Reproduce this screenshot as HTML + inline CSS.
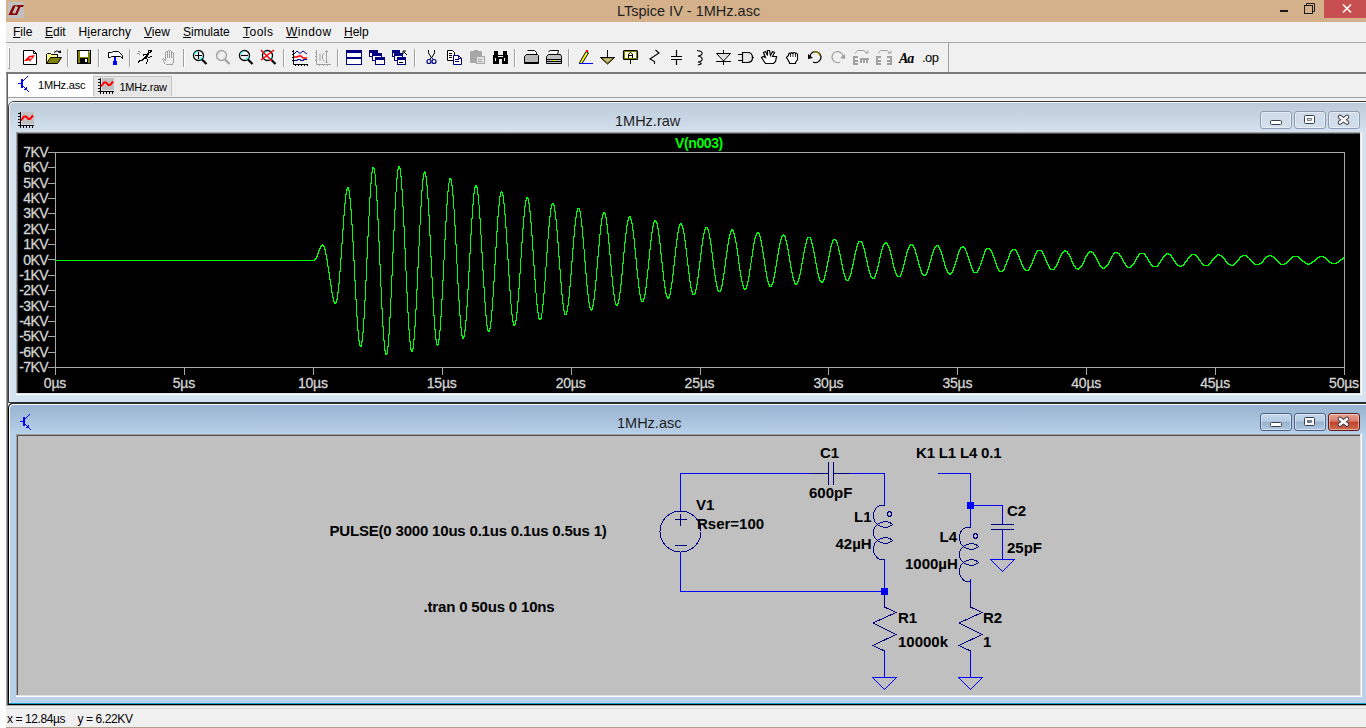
<!DOCTYPE html>
<html><head><meta charset="utf-8"><title>LTspice IV - 1MHz.asc</title>
<style>
*{margin:0;padding:0;box-sizing:border-box}
html,body{width:1366px;height:728px;overflow:hidden;background:#fff;position:relative;font-family:"Liberation Sans",sans-serif}
.a{position:absolute}
.t{position:absolute;white-space:nowrap}
.yl{left:17px;width:31px;text-align:right;font-size:14px;line-height:14px;font-weight:normal;color:#d4d4d4;letter-spacing:-0.6px;-webkit-text-stroke:0.3px #d4d4d4}
.xl{top:376px;width:60px;text-align:center;font-size:14px;line-height:14px;font-weight:normal;color:#d4d4d4;letter-spacing:-0.2px;-webkit-text-stroke:0.3px #d4d4d4}
u{text-decoration:underline;text-underline-offset:1px}
</style></head><body>
<div class="a" style="left:6px;top:0px;width:1360px;height:22px;background:#d4b18b;"></div><div class="a" style="left:8px;top:2px;width:16px;height:16px;background:#c0c0c0;"></div><svg class="a" style="left:8px;top:2px" width="16" height="16"><path d="M0.5 13 L4.5 4.5 Q5 3 7 3 H8 L4.5 10.5 Q4 11.5 6 11.5 H7.5 L6.5 13 Z M8.5 3 H16 L15 5 H12.5 L9 13 H6.5 L10 5.5 Q10.5 4.5 9 4.5 H8 Z" fill="#8b0000"/></svg><div class="t" style="left:617px;top:3.73px;font-size:14.5px;line-height:14.5px;color:#1e1e1e;font-weight:normal;letter-spacing:0px;">LTspice IV - 1MHz.asc</div><div class="a" style="left:1280px;top:10px;width:8px;height:2px;background:#1a1a1a;"></div><svg class="a" style="left:1304px;top:3px" width="12" height="11"><rect x="0.5" y="2.5" width="8" height="8" fill="none" stroke="#1a1a1a"/><path d="M2.5 2.5V0.5H10.5V8.5H8.5" fill="none" stroke="#1a1a1a"/></svg><div class="a" style="left:1324px;top:0px;width:42px;height:18px;background:#c74f4f;"></div><svg class="a" style="left:1341px;top:3px" width="12" height="11"><path d="M2 1.5L10 9.5M10 1.5L2 9.5" stroke="#fff" stroke-width="1.6"/></svg><div class="a" style="left:6px;top:22px;width:1360px;height:20px;background:#f0f0f0;"></div><div class="a" style="left:6px;top:42px;width:1360px;height:1px;background:#a9a9a9;"></div><div class="t" style="left:13px;top:25.84px;font-size:12px;line-height:12px;color:#000;font-weight:normal;letter-spacing:0px;"><u>F</u>ile</div><div class="t" style="left:45px;top:25.84px;font-size:12px;line-height:12px;color:#000;font-weight:normal;letter-spacing:0px;"><u>E</u>dit</div><div class="t" style="left:78.5px;top:25.84px;font-size:12px;line-height:12px;color:#000;font-weight:normal;letter-spacing:0.15px;">H<u>i</u>erarchy</div><div class="t" style="left:144px;top:25.84px;font-size:12px;line-height:12px;color:#000;font-weight:normal;letter-spacing:0px;"><u>V</u>iew</div><div class="t" style="left:183px;top:25.84px;font-size:12px;line-height:12px;color:#000;font-weight:normal;letter-spacing:0px;"><u>S</u>imulate</div><div class="t" style="left:243px;top:25.84px;font-size:12px;line-height:12px;color:#000;font-weight:normal;letter-spacing:0.5px;"><u>T</u>ools</div><div class="t" style="left:286px;top:25.84px;font-size:12px;line-height:12px;color:#000;font-weight:normal;letter-spacing:0.5px;"><u>W</u>indow</div><div class="t" style="left:344px;top:25.84px;font-size:12px;line-height:12px;color:#000;font-weight:normal;letter-spacing:0px;"><u>H</u>elp</div><div class="a" style="left:6px;top:43px;width:1360px;height:29px;background:#f0f0f0;"></div><div class="a" style="left:6px;top:72px;width:1360px;height:2px;background:#7a7a7a;"></div><div class="a" style="left:948px;top:43px;width:1px;height:29px;background:#a0a0a0;"></div><svg class="a" style="left:0;top:0" width="960" height="74" id="tb"><path d="M8.5 47V68M8 47.5H10" stroke="#fff"/><path d="M9.5 48V68M8 68.5H10" stroke="#a0a0a0"/><rect x="67" y="49" width="1" height="18" fill="#a0a0a0"/><rect x="68" y="49" width="1" height="18" fill="#fff"/><rect x="98" y="49" width="1" height="18" fill="#a0a0a0"/><rect x="99" y="49" width="1" height="18" fill="#fff"/><rect x="129" y="49" width="1" height="18" fill="#a0a0a0"/><rect x="130" y="49" width="1" height="18" fill="#fff"/><rect x="183" y="49" width="1" height="18" fill="#a0a0a0"/><rect x="184" y="49" width="1" height="18" fill="#fff"/><rect x="283" y="49" width="1" height="18" fill="#a0a0a0"/><rect x="284" y="49" width="1" height="18" fill="#fff"/><rect x="337" y="49" width="1" height="18" fill="#a0a0a0"/><rect x="338" y="49" width="1" height="18" fill="#fff"/><rect x="414" y="49" width="1" height="18" fill="#a0a0a0"/><rect x="415" y="49" width="1" height="18" fill="#fff"/><rect x="514" y="49" width="1" height="18" fill="#a0a0a0"/><rect x="515" y="49" width="1" height="18" fill="#fff"/><rect x="568" y="49" width="1" height="18" fill="#a0a0a0"/><rect x="569" y="49" width="1" height="18" fill="#fff"/><path d="M23.5 50.5H33.5L36.5 53.5V64.5H23.5Z" fill="#fff" stroke="#000"/><path d="M33.5 50.5V53.5H36.5" fill="none" stroke="#000"/><path d="M24 61L28 57L29 56L35 55L33 58L31 60L30 62L29 60L27 61Z" fill="#ff0000"/><path d="M29 58L31 57L32 58L30 59Z" fill="#fff"/><path d="M46.5 63.5V54.5L47.5 53.5H50.5L51.5 54.5H57.5V57.5" fill="#ffff90" stroke="#000"/><path d="M46.5 63.5L50.5 57.5H61.5L57.5 63.5Z" fill="#808000" stroke="#000"/><path d="M54 52.5Q57 49.5 60 52" fill="none" stroke="#000"/><path d="M58 53H61V50Z" fill="#000"/><rect x="77" y="50" width="14" height="14" fill="#000"/><rect x="78" y="51" width="12" height="12" fill="#808000"/><rect x="80" y="51" width="8" height="6" fill="#fff"/><rect x="80" y="58" width="8" height="5" fill="#000"/><rect x="85" y="59" width="2" height="3" fill="#fff"/><rect x="89" y="51" width="1" height="1" fill="#fff"/><path d="M108.5 52.5H111.5L113.5 51.5H118.5L122.5 55.5V58.5L120.5 56.5H111.5L110.5 57.5H108.5Z" fill="#fff" stroke="#000"/><rect x="114" y="57" width="2" height="5" fill="#0000ff"/><rect x="113" y="61" width="4" height="4" fill="#0000ff"/><path d="M148 50h4v1h-4zM148 51h1v1h-1zM150 51h2v1h-2zM148 52h3v1h-3zM147 53h2v1h-2zM146 54h3v1h-3zM146 55h2v1h-2zM145 56h3v1h-3zM144 57h3v1h-3zM143 58h3v1h-3zM142 59h2v1h-2zM139 60h4v1h-4zM138 61h2v1h-2zM138 62h1v1h-1zM146 58h1v1h-1zM147 59h1v3h-1zM146 62h1v2h-1zM143 54h3v1h-3zM143 55h1v1h-1zM148 57h2v1h-2zM150 56h2v1h-2z" fill="#000"/><path d="M138 51h2v1h-2zM140 52h1v1h-1zM137 53h2v1h-2zM139 54h1v1h-1z" fill="#909090"/><path shape-rendering="crispEdges" d="M165.5 64.5L162.5 59.5L163.5 58.5L165.5 60.5V52.5L166.5 51.5L167.5 52.5V58M167.5 58V51.5L168.5 50.5L169.5 51.5V58M169.5 58V51.5L170.5 50.5L171.5 51.5V58M171.5 58V53.5L172.5 52.5L173.5 53.5V61.5L172.5 64.5H165.5" fill="none" stroke="#a0a0a0"/><circle cx="198.5" cy="55.5" r="5" fill="#fff" stroke="#000" stroke-width="1.3"/><path d="M202.0 59.5L206.5 64" stroke="#000" stroke-width="2.2"/><path d="M194.5 54A4.2 4.2 0 0 1 197.5 51.5M202.5 57A4.2 4.2 0 0 1 199.5 59.5" fill="none" stroke="#00ffff" stroke-width="1.2"/><path d="M195 55.5H202M198.5 52V59" stroke="#000" stroke-width="1.2"/><circle cx="221.5" cy="55.5" r="5" fill="none" stroke="#a0a0a0" stroke-width="1.3"/><path d="M225.0 59.5L229.5 64" stroke="#a0a0a0" stroke-width="2.2"/><path d="M218.5 55A3 3 0 0 1 220.5 52.5M222.5 58.5A3 3 0 0 0 224.5 56.5" fill="none" stroke="#c8c8c8"/><circle cx="244.5" cy="55.5" r="5" fill="#fff" stroke="#000" stroke-width="1.3"/><path d="M248.0 59.5L252.5 64" stroke="#000" stroke-width="2.2"/><path d="M240.5 54A4.2 4.2 0 0 1 243.5 51.5M248.5 57A4.2 4.2 0 0 1 245.5 59.5" fill="none" stroke="#00ffff" stroke-width="1.2"/><path d="M241 55.5H248" stroke="#000" stroke-width="1.2"/><circle cx="267.5" cy="55.5" r="5" fill="#fff" stroke="#000" stroke-width="1.3"/><path d="M271.0 59.5L275.5 64" stroke="#000" stroke-width="2.2"/><path d="M263.5 54A4.2 4.2 0 0 1 266.5 51.5M271.5 57A4.2 4.2 0 0 1 268.5 59.5" fill="none" stroke="#00ffff" stroke-width="1.2"/><path d="M261 50L272 61M274 50L261 60" stroke="#ff0000" stroke-width="1.5"/><path d="M293.5 50V64.5H308" stroke="#000" fill="none"/><path d="M292 51h1v1h-1zM292 54h1v1h-1zM292 57h1v1h-1zM292 60h1v1h-1zM295 65h1v1h-1zM298 65h1v1h-1zM301 65h1v1h-1zM304 65h1v1h-1zM307 65h1v1h-1z" fill="#000"/><path d="M294 54L297 51L300 53.5L303 51L307 54" fill="none" stroke="#000080"/><path d="M294 57H297L299 56H301L303 58H307" fill="none" stroke="#ff0000" stroke-width="1.4"/><path d="M294 60.5H297L298 59.5H300L301 60.5H303L304 59.5H307" fill="none" stroke="#000080" stroke-width="1.2"/><path d="M316.5 50V64.5H331" stroke="#a0a0a0" fill="none"/><path d="M315 52h1v1h-1zM315 56h1v1h-1zM315 60h1v1h-1zM319 65h1v1h-1zM323 65h1v1h-1zM327 65h1v1h-1z" fill="#a0a0a0"/><path d="M324 53A4 5 0 0 0 324 61M326.5 50.5V63M325 52L326.5 50.5L328 52M325 61.5L326.5 63L328 61.5M320 53.5V61" fill="none" stroke="#a0a0a0"/><rect x="346.5" y="50.5" width="15" height="14" fill="#fff" stroke="#000080"/><rect x="347" y="51" width="14" height="2" fill="#000080"/><rect x="347" y="57" width="14" height="2" fill="#000080"/><path d="M347 57.5H361" stroke="#000080"/><rect x="369.5" y="50.5" width="8" height="6" fill="#fff" stroke="#000080"/><rect x="372.5" y="53.5" width="9" height="7" fill="#fff" stroke="#000080"/><rect x="375.5" y="57.5" width="9" height="7" fill="#fff" stroke="#000080"/><rect x="370" y="51" width="7" height="2" fill="#000080"/><rect x="373" y="54" width="8" height="2" fill="#000080"/><rect x="376" y="58" width="8" height="2" fill="#000080"/><rect x="392.5" y="50.5" width="7" height="6" fill="#fff" stroke="#000080"/><rect x="394.5" y="53.5" width="8" height="7" fill="#fff" stroke="#000080"/><rect x="397.5" y="57.5" width="8" height="7" fill="#fff" stroke="#000080"/><rect x="393" y="51" width="6" height="2" fill="#000080"/><rect x="395" y="54" width="7" height="2" fill="#000080"/><rect x="398" y="58" width="7" height="2" fill="#000080"/><rect x="399" y="62" width="4" height="1" fill="#000"/><path d="M403 51H406M403 51V54M403 51L407 55" stroke="#000" fill="none"/><path d="M428.5 50V53L431.5 58M434.5 50V53L431.5 58" fill="none" stroke="#000"/><circle cx="429" cy="61.5" r="2" fill="none" stroke="#000080" stroke-width="1.2"/><circle cx="434" cy="61.5" r="2" fill="none" stroke="#000080" stroke-width="1.2"/><path d="M431 58L429.5 60M432 58L433.5 60" stroke="#000080"/><path d="M447.5 50.5H452.5L454.5 52.5V60.5H447.5Z" fill="#fff" stroke="#000"/><path d="M449 53.5h3M449 55.5h3M449 57.5h3" stroke="#000" fill="none"/><path d="M453.5 55.5H458.5L461.5 58.5V64.5H453.5Z" fill="#fff" stroke="#000080"/><path d="M455 59.5h4M455 61.5h4" stroke="#000080" fill="none"/><path d="M458.5 55.5V58.5H461.5" fill="none" stroke="#000080"/><rect x="470" y="51" width="12" height="12" rx="1" fill="#a8a8a8"/><rect x="474" y="50" width="4" height="2" fill="#a8a8a8"/><rect x="476.5" y="56.5" width="8" height="7" fill="#e0e0e0" stroke="#a8a8a8"/><path d="M478 59.5h4M478 61.5h4" stroke="#a8a8a8" fill="none"/><path d="M494 51h4v4h5v-4h4v4h1v9h-6v-5h-3v5h-6v-9h1z" fill="#000"/><path d="M495 58h1v3h-1zM504 58h1v3h-1zM498 56h5v1h-5z" fill="#fff"/><path d="M527.5 50.5H534.5L536.5 52.5V54" fill="#fff" stroke="#000"/><path d="M524.5 56.5L526.5 54.5H537.5L538.5 55.5V63.5H524.5Z" fill="#b8b8b8" stroke="#000"/><path d="M525 62.5H538" stroke="#000"/><path d="M548.5 51.5L550.5 50.5H558.5L557.5 54.5" fill="#fff" stroke="#000"/><path d="M546.5 56.5L548.5 54.5H560.5L561.5 56.5V63.5H546.5Z" fill="#c0c0c0" stroke="#000"/><path d="M547 59.5H561M547 61.5H561" stroke="#000"/><rect x="553" y="60" width="3" height="1" fill="#ffff00"/><path d="M580 62L586 51.5L588.5 53L582 63.5L579.5 63.5Z" fill="#ffff00" stroke="#000" stroke-width="1"/><rect x="586" y="50" width="2" height="2" fill="#ff0000"/><rect x="579" y="63" width="14" height="1" fill="#0000ff"/><path d="M607.5 50V57" stroke="#000"/><path d="M600.5 57.5H614.5L607.5 64Z" fill="#808000" stroke="#000"/><path d="M603 58.5H612L607.5 62.5Z" fill="#c8c090"/><rect x="623.5" y="50.5" width="14" height="9" rx="1" fill="#fffde0" stroke="#000" stroke-width="1.2"/><rect x="624.5" y="51.5" width="12" height="7" fill="none" stroke="#808000"/><path d="M628.5 58V54L630.5 52.5L632.5 54V58M628.5 55.5H632.5" fill="none" stroke="#000"/><path d="M630.5 60V64" stroke="#000"/><path d="M655.5 50L659 53L650 59L654.5 61.5V64" fill="none" stroke="#000" stroke-width="1.1"/><path d="M676.5 50V56M676.5 59V65M671 56.5H682M671 59.5H682" stroke="#000" stroke-width="1.2"/><path d="M697 50.5Q703 51 702 54Q701 56 698 56Q703 57 702 60Q701 62 698 62Q702 63 701 64L698 65" fill="none" stroke="#000" stroke-width="1.1"/><path d="M723.5 50V65M716 61.5H731" stroke="#000"/><path d="M716.5 53.5H730.5L723.5 61Z" fill="#e0e0e0" stroke="#000"/><path d="M742.5 52.5H747.5Q752.5 52.5 752.5 57.5Q752.5 62.5 747.5 62.5H742.5Z" fill="#e8e8e8" stroke="#000" stroke-width="1.2"/><path d="M738 54.5H742M738 60.5H742M752 57.5H754" stroke="#000"/><path d="M765.5 63.5L761.5 57.5L763.5 56.5L765.5 57.5L763.5 52.5L765.5 51.5L767.5 55.5L767.5 50.5L769.5 50.5L770.5 55.5L772.5 51.5L774.5 52.5L772.5 56.5L776.5 56.5L775.5 61.5L773.5 63.5Z" fill="#fff" stroke="#000" stroke-width="1.2"/><path d="M786.5 57.5L788.5 55.5V54.5Q789.5 52 790.5 54Q791.5 51.5 793 53.5Q794 51.5 795.5 53.5Q796.5 52.5 797.5 54.5V59.5L795.5 62.5V63.5H789.5V62.5Z" fill="#fff" stroke="#000" stroke-width="1.1"/><path d="M790.5 54V57M793 53.5V57M795.5 53.5V57" stroke="#000" stroke-width="0.8"/><path d="M810 56.5A5.5 5.5 0 1 1 813 62" fill="none" stroke="#000" stroke-width="1.2"/><path d="M814 52A5.5 5.5 0 0 1 820 56" fill="none" stroke="#a09000" stroke-width="1.2"/><path d="M808 54L808 59L813 58Z" fill="#000"/><path d="M843 56.5A5.5 5.5 0 1 0 840 62" fill="none" stroke="#a0a0a0" stroke-width="1.2"/><path d="M845 54L845 59L840 58Z" fill="#a0a0a0"/><path d="M853 56h5v2h-3v2h3v2h-3v1h3v2h-5zM860 58h9v2h-1v3h-2v-3h-1v3h-2v-3h-1v3h-2z" fill="#a0a0a0"/><path d="M855 53.5L857.5 50.5H864L867 53" fill="none" stroke="#a0a0a0"/><path d="M865 53H868V50.5" fill="none" stroke="#a0a0a0"/><path d="M876 56h5v2h-3v2h3v2h-3v1h3v2h-5zM887 56h5v9h-5v-2h3v-1h-3v-2h3v-2h-3z" fill="#a0a0a0"/><path d="M878 53.5L880.5 50.5H887L890 53" fill="none" stroke="#a0a0a0"/><path d="M888 53H891V50.5" fill="none" stroke="#a0a0a0"/><text x="899" y="63" font-family="Liberation Serif" font-style="italic" font-weight="bold" font-size="14" fill="#000" letter-spacing="-1">Aa</text><text x="922" y="62" font-family="Liberation Sans" font-size="13" fill="#000" letter-spacing="-0.6">.op</text></svg><div class="a" style="left:6px;top:74px;width:1360px;height:23px;background:#f0f0f0;"></div><div class="a" style="left:6px;top:97px;width:1360px;height:1px;background:#a0a0a0;"></div><div class="a" style="left:8px;top:74px;width:85px;height:23px;background:#ffffff;"></div><div class="a" style="left:93px;top:76px;width:79px;height:20px;background:#e6e6e6;border:1px solid #c4c4c4;border-bottom:none"></div><div class="t" style="left:38px;top:79.69px;font-size:11px;line-height:11px;color:#000;font-weight:normal;letter-spacing:-0.2px;">1MHz.asc</div><div class="t" style="left:119.5px;top:81.69px;font-size:11px;line-height:11px;color:#000;font-weight:normal;letter-spacing:-0.3px;">1MHz.raw</div><svg class="a" style="left:0;top:0" width="40" height="440"><path d="M18 83h3v1h-3zM21 79h2v9h-2zM23 80h1v1h-1zM24 79h1v1h-1zM25 78h1v1h-1zM26 77h1v1h-1zM27 76h1v1h-1zM23 86h1v1h-1zM24 87h1v1h-1zM25 88h1v1h-1zM26 89h1v1h-1zM27 90h1v1h-1zM28 91h1v1h-1zM26 87h1v3h-1zM24 89h3v1h-3zM25 88h2v2h-2z" fill="#0000ff"/></svg><svg class="a" style="left:0;top:0" width="200" height="200"><rect x="102" y="78" width="12" height="12" fill="#c0c0c0"/><path d="M100 78h1v15h-1zM98 91h16v1h-16zM98 79h2v1h-2zM98 82h2v1h-2zM98 85h2v1h-2zM98 88h2v1h-2zM100 92h1v2h-1zM103 92h1v2h-1zM106 92h1v2h-1zM109 92h1v2h-1zM112 92h1v2h-1z" fill="#000"/><path d="M101 86.5L104 82.5H106L108.5 85H110L113 81.5" fill="none" stroke="#ff0000" stroke-width="2"/></svg><div class="a" style="left:6px;top:98px;width:1360px;height:607px;background:#f0f0f0;"></div><div class="a" style="left:6px;top:74px;width:1px;height:631px;background:#a0a0a0;"></div><div class="a" style="left:7px;top:74px;width:1px;height:631px;background:#646464;"></div><div class="a" style="left:8px;top:101px;width:1380px;height:302px;background:#d6e3f1;border:1px solid #3c3c3c;border-radius:6px 6px 0 0;"></div><div class="a" style="left:9px;top:102px;width:1378px;height:31px;background:linear-gradient(#bdcbd9,#d4e1ef);border-top:1px solid #eef3f8;border-left:1px solid #eef3f8;border-radius:5px 5px 0 0"></div><div class="a" style="left:9px;top:133px;width:1px;height:268px;background:#eef3f8"></div><div class="t" style="left:615px;top:113.73px;font-size:14.5px;line-height:14.5px;color:#1e1e1e;font-weight:normal;letter-spacing:0px;">1MHz.raw</div><svg class="a" style="left:0;top:0" width="200" height="200"><rect x="22" y="112" width="12" height="12" fill="#c0c0c0"/><path d="M20 112h1v15h-1zM18 125h16v1h-16zM18 113h2v1h-2zM18 116h2v1h-2zM18 119h2v1h-2zM18 122h2v1h-2zM20 126h1v2h-1zM23 126h1v2h-1zM26 126h1v2h-1zM29 126h1v2h-1zM32 126h1v2h-1z" fill="#000"/><path d="M21 120.5L24 116.5H26L28.5 119H30L33 115.5" fill="none" stroke="#ff0000" stroke-width="2"/></svg><div class="a" style="left:1260px;top:111px;width:32px;height:18px;background:linear-gradient(#cfdbe8,#d3dfec);border:1px solid #8c9cb4;border-radius:3px;box-shadow:inset 0 0 0 1px rgba(255,255,255,0.45)"></div><div class="a" style="left:1294px;top:111px;width:32px;height:18px;background:linear-gradient(#cfdbe8,#d3dfec);border:1px solid #8c9cb4;border-radius:3px;box-shadow:inset 0 0 0 1px rgba(255,255,255,0.45)"></div><div class="a" style="left:1328px;top:111px;width:32px;height:18px;background:linear-gradient(#cfdbe8,#d3dfec);border:1px solid #8c9cb4;border-radius:3px;box-shadow:inset 0 0 0 1px rgba(255,255,255,0.45)"></div><svg class="a" style="left:1260px;top:111px" width="100" height="18"><rect x="10.5" y="9.5" width="11" height="4" rx="1" fill="#fff" stroke="#3c4048"/><rect x="44.5" y="4.5" width="10" height="8" rx="1" fill="#fff" stroke="#3c4048"/><rect x="47.5" y="7.5" width="4" height="2" fill="#cfdbe8" stroke="#3c4048" stroke-width="0.6"/><path d="M80 6L87 11.5M87 6L80 11.5" stroke="#3c4048" stroke-width="4.6" stroke-linecap="round"/><path d="M80 6L87 11.5M87 6L80 11.5" stroke="#fff" stroke-width="2.6" stroke-linecap="round"/></svg><div class="a" style="left:16px;top:132px;width:1346px;height:263px;background:#ffffff;"></div><div class="a" style="left:16px;top:132px;width:1345px;height:262px;background:#e3e3e3;"></div><div class="a" style="left:16px;top:132px;width:1344px;height:261px;background:#a0a0a0;"></div><div class="a" style="left:17px;top:133px;width:1343px;height:260px;background:#505050;"></div><div class="a" style="left:18px;top:134px;width:1342px;height:259px;background:#000;"></div><svg class="a" style="left:0;top:0" width="1366" height="400"><path d="M55 152h1290v1h-1290zM55 367h1290v1h-1290zM55 152h1v216h-1zM1344 152h1v216h-1z" fill="#a8a8a8"/><rect x="48" y="152" width="7" height="1" fill="#a8a8a8"/><rect x="48" y="167" width="7" height="1" fill="#a8a8a8"/><rect x="48" y="183" width="7" height="1" fill="#a8a8a8"/><rect x="48" y="198" width="7" height="1" fill="#a8a8a8"/><rect x="48" y="213" width="7" height="1" fill="#a8a8a8"/><rect x="48" y="229" width="7" height="1" fill="#a8a8a8"/><rect x="48" y="244" width="7" height="1" fill="#a8a8a8"/><rect x="48" y="259" width="7" height="1" fill="#a8a8a8"/><rect x="48" y="275" width="7" height="1" fill="#a8a8a8"/><rect x="48" y="290" width="7" height="1" fill="#a8a8a8"/><rect x="48" y="306" width="7" height="1" fill="#a8a8a8"/><rect x="48" y="321" width="7" height="1" fill="#a8a8a8"/><rect x="48" y="336" width="7" height="1" fill="#a8a8a8"/><rect x="48" y="352" width="7" height="1" fill="#a8a8a8"/><rect x="48" y="367" width="7" height="1" fill="#a8a8a8"/><rect x="55" y="367" width="1" height="8" fill="#a8a8a8"/><rect x="184" y="367" width="1" height="8" fill="#a8a8a8"/><rect x="313" y="367" width="1" height="8" fill="#a8a8a8"/><rect x="442" y="367" width="1" height="8" fill="#a8a8a8"/><rect x="571" y="367" width="1" height="8" fill="#a8a8a8"/><rect x="700" y="367" width="1" height="8" fill="#a8a8a8"/><rect x="828" y="367" width="1" height="8" fill="#a8a8a8"/><rect x="957" y="367" width="1" height="8" fill="#a8a8a8"/><rect x="1086" y="367" width="1" height="8" fill="#a8a8a8"/><rect x="1215" y="367" width="1" height="8" fill="#a8a8a8"/><rect x="1344" y="367" width="1" height="8" fill="#a8a8a8"/><path d="M55 260h259v1h-259zM314 259h1v2h-1zM315 258h1v2h-1zM316 256h1v3h-1zM317 253h1v4h-1zM318 250h1v4h-1zM319 248h1v3h-1zM320 246h1v3h-1zM321 245h1v2h-1zM322 244h1v2h-1zM323 245h1v2h-1zM324 246h1v4h-1zM325 249h1v6h-1zM326 254h1v6h-1zM327 259h1v8h-1zM328 266h1v7h-1zM329 272h1v8h-1zM330 279h1v7h-1zM331 285h1v8h-1zM332 292h1v6h-1zM333 297h1v5h-1zM334 301h1v3h-1zM335 302h1v2h-1zM336 299h1v4h-1zM337 292h1v8h-1zM338 283h1v10h-1zM339 271h1v13h-1zM340 258h1v14h-1zM341 243h1v16h-1zM342 229h1v15h-1zM343 215h1v15h-1zM344 203h1v13h-1zM345 194h1v10h-1zM346 189h1v6h-1zM347 187h1v3h-1zM348 187h1v4h-1zM349 190h1v9h-1zM350 198h1v12h-1zM351 209h1v16h-1zM352 224h1v18h-1zM353 241h1v20h-1zM354 260h1v21h-1zM355 280h1v20h-1zM356 299h1v18h-1zM357 316h1v15h-1zM358 330h1v11h-1zM359 340h1v6h-1zM360 345h1v2h-1zM361 341h1v6h-1zM362 332h1v10h-1zM363 318h1v15h-1zM364 300h1v19h-1zM365 280h1v21h-1zM366 258h1v23h-1zM367 236h1v23h-1zM368 216h1v21h-1zM369 197h1v19h-1zM370 183h1v15h-1zM371 172h1v12h-1zM372 167h1v6h-1zM373 167h1v2h-1zM374 168h1v6h-1zM375 174h1v12h-1zM376 185h1v16h-1zM377 200h1v20h-1zM378 219h1v23h-1zM379 241h1v24h-1zM380 264h1v23h-1zM381 287h1v22h-1zM382 308h1v19h-1zM383 326h1v15h-1zM384 340h1v11h-1zM385 350h1v5h-1zM386 353h1v2h-1zM387 346h1v8h-1zM388 334h1v13h-1zM389 317h1v18h-1zM390 298h1v20h-1zM391 275h1v23h-1zM392 252h1v24h-1zM393 230h1v23h-1zM394 209h1v22h-1zM395 192h1v18h-1zM396 178h1v14h-1zM397 169h1v10h-1zM398 166h1v4h-1zM399 166h1v3h-1zM400 168h1v9h-1zM401 176h1v14h-1zM402 189h1v18h-1zM403 206h1v21h-1zM404 226h1v23h-1zM405 248h1v23h-1zM406 271h1v22h-1zM407 292h1v21h-1zM408 312h1v18h-1zM409 329h1v13h-1zM410 341h1v9h-1zM411 349h1v3h-1zM412 348h1v4h-1zM413 339h1v10h-1zM414 326h1v14h-1zM415 309h1v18h-1zM416 289h1v21h-1zM417 267h1v23h-1zM418 246h1v22h-1zM419 225h1v21h-1zM420 206h1v19h-1zM421 190h1v17h-1zM422 179h1v12h-1zM423 173h1v7h-1zM424 171h1v3h-1zM425 172h1v5h-1zM426 176h1v10h-1zM427 185h1v14h-1zM428 198h1v18h-1zM429 215h1v21h-1zM430 235h1v22h-1zM431 256h1v22h-1zM432 277h1v21h-1zM433 297h1v19h-1zM434 315h1v15h-1zM435 329h1v11h-1zM436 339h1v6h-1zM437 344h1v2h-1zM438 339h1v6h-1zM439 330h1v10h-1zM440 316h1v15h-1zM441 299h1v18h-1zM442 280h1v20h-1zM443 260h1v21h-1zM444 239h1v21h-1zM445 221h1v19h-1zM446 204h1v18h-1zM447 191h1v14h-1zM448 183h1v9h-1zM449 178h1v5h-1zM450 178h1v2h-1zM451 179h1v7h-1zM452 185h1v11h-1zM453 195h1v14h-1zM454 209h1v17h-1zM455 225h1v20h-1zM456 244h1v20h-1zM457 264h1v20h-1zM458 283h1v18h-1zM459 300h1v16h-1zM460 315h1v13h-1zM461 327h1v9h-1zM462 335h1v4h-1zM463 336h1v3h-1zM464 330h1v7h-1zM465 320h1v11h-1zM466 306h1v15h-1zM467 289h1v18h-1zM468 271h1v19h-1zM469 253h1v19h-1zM470 234h1v20h-1zM471 218h1v17h-1zM472 204h1v15h-1zM473 193h1v12h-1zM474 187h1v7h-1zM475 185h1v3h-1zM476 185h1v3h-1zM477 187h1v8h-1zM478 194h1v11h-1zM479 205h1v14h-1zM480 218h1v17h-1zM481 235h1v18h-1zM482 252h1v19h-1zM483 270h1v18h-1zM484 287h1v16h-1zM485 302h1v14h-1zM486 315h1v11h-1zM487 325h1v6h-1zM488 330h1v2h-1zM489 328h1v4h-1zM490 321h1v8h-1zM491 310h1v12h-1zM492 297h1v14h-1zM493 281h1v16h-1zM494 264h1v18h-1zM495 247h1v18h-1zM496 231h1v17h-1zM497 216h1v16h-1zM498 205h1v12h-1zM499 196h1v10h-1zM500 192h1v5h-1zM501 191h1v2h-1zM502 192h1v4h-1zM503 195h1v9h-1zM504 203h1v12h-1zM505 214h1v14h-1zM506 227h1v17h-1zM507 243h1v17h-1zM508 259h1v17h-1zM509 275h1v16h-1zM510 290h1v14h-1zM511 304h1v11h-1zM512 314h1v8h-1zM513 321h1v5h-1zM514 324h1v2h-1zM515 320h1v5h-1zM516 312h1v9h-1zM517 301h1v12h-1zM518 288h1v14h-1zM519 273h1v16h-1zM520 258h1v16h-1zM521 242h1v16h-1zM522 228h1v15h-1zM523 216h1v13h-1zM524 206h1v11h-1zM525 200h1v7h-1zM526 197h1v4h-1zM527 197h1v2h-1zM528 198h1v6h-1zM529 203h1v9h-1zM530 211h1v12h-1zM531 222h1v14h-1zM532 235h1v16h-1zM533 250h1v16h-1zM534 265h1v15h-1zM535 279h1v14h-1zM536 293h1v12h-1zM537 304h1v9h-1zM538 312h1v7h-1zM539 318h1v2h-1zM540 318h1v2h-1zM541 313h1v6h-1zM542 304h1v9h-1zM543 293h1v12h-1zM544 281h1v13h-1zM545 267h1v14h-1zM546 252h1v15h-1zM547 239h1v14h-1zM548 226h1v13h-1zM549 216h1v11h-1zM550 208h1v9h-1zM551 204h1v5h-1zM552 203h1v2h-1zM553 203h1v3h-1zM554 205h1v7h-1zM555 211h1v9h-1zM556 219h1v12h-1zM557 230h1v13h-1zM558 242h1v15h-1zM559 256h1v14h-1zM560 269h1v14h-1zM561 282h1v13h-1zM562 294h1v10h-1zM563 303h1v8h-1zM564 310h1v5h-1zM565 314h1v1h-1zM566 311h1v4h-1zM567 305h1v7h-1zM568 297h1v9h-1zM569 286h1v12h-1zM570 274h1v13h-1zM571 261h1v14h-1zM572 248h1v14h-1zM573 236h1v13h-1zM574 225h1v12h-1zM575 217h1v9h-1zM576 211h1v7h-1zM577 208h1v4h-1zM578 208h1v1h-1zM579 208h1v4h-1zM580 211h1v7h-1zM581 218h1v9h-1zM582 226h1v12h-1zM583 237h1v12h-1zM584 249h1v13h-1zM585 261h1v13h-1zM586 273h1v13h-1zM587 285h1v10h-1zM588 294h1v9h-1zM589 302h1v6h-1zM590 307h1v3h-1zM591 309h1v2h-1zM592 305h1v5h-1zM593 299h1v7h-1zM594 290h1v10h-1zM595 280h1v11h-1zM596 268h1v13h-1zM597 256h1v13h-1zM598 245h1v12h-1zM599 234h1v12h-1zM600 225h1v10h-1zM601 218h1v8h-1zM602 214h1v5h-1zM603 212h1v3h-1zM604 212h1v2h-1zM605 213h1v5h-1zM606 217h1v8h-1zM607 224h1v10h-1zM608 233h1v11h-1zM609 243h1v12h-1zM610 254h1v12h-1zM611 265h1v12h-1zM612 276h1v11h-1zM613 286h1v9h-1zM614 294h1v7h-1zM615 301h1v4h-1zM616 304h1v2h-1zM617 303h1v3h-1zM618 299h1v5h-1zM619 292h1v8h-1zM620 284h1v9h-1zM621 274h1v11h-1zM622 263h1v12h-1zM623 252h1v12h-1zM624 242h1v11h-1zM625 233h1v10h-1zM626 225h1v9h-1zM627 220h1v6h-1zM628 217h1v4h-1zM629 216h1v2h-1zM630 216h1v4h-1zM631 219h1v5h-1zM632 223h1v8h-1zM633 230h1v9h-1zM634 238h1v11h-1zM635 248h1v11h-1zM636 258h1v12h-1zM637 269h1v10h-1zM638 278h1v10h-1zM639 287h1v8h-1zM640 294h1v6h-1zM641 299h1v3h-1zM642 301h1v1h-1zM643 298h1v4h-1zM644 294h1v5h-1zM645 287h1v8h-1zM646 278h1v10h-1zM647 269h1v10h-1zM648 259h1v11h-1zM649 249h1v11h-1zM650 240h1v10h-1zM651 232h1v9h-1zM652 226h1v7h-1zM653 222h1v5h-1zM654 220h1v3h-1zM655 220h1v2h-1zM656 221h1v3h-1zM657 223h1v6h-1zM658 228h1v8h-1zM659 235h1v9h-1zM660 243h1v11h-1zM661 253h1v10h-1zM662 262h1v10h-1zM663 271h1v10h-1zM664 280h1v8h-1zM665 287h1v7h-1zM666 293h1v4h-1zM667 296h1v3h-1zM668 297h1v2h-1zM669 294h1v4h-1zM670 288h1v7h-1zM671 282h1v7h-1zM672 274h1v9h-1zM673 265h1v10h-1zM674 256h1v10h-1zM675 247h1v10h-1zM676 239h1v9h-1zM677 232h1v8h-1zM678 227h1v6h-1zM679 224h1v4h-1zM680 223h1v2h-1zM681 223h1v3h-1zM682 225h1v4h-1zM683 228h1v6h-1zM684 233h1v8h-1zM685 240h1v9h-1zM686 248h1v9h-1zM687 257h1v9h-1zM688 265h1v9h-1zM689 273h1v9h-1zM690 281h1v7h-1zM691 287h1v5h-1zM692 291h1v4h-1zM693 294h1v1h-1zM694 293h1v2h-1zM695 289h1v5h-1zM696 284h1v6h-1zM697 277h1v8h-1zM698 269h1v9h-1zM699 261h1v9h-1zM700 253h1v9h-1zM701 245h1v9h-1zM702 238h1v8h-1zM703 233h1v6h-1zM704 229h1v5h-1zM705 227h1v3h-1zM706 227h1v1h-1zM707 227h1v3h-1zM708 229h1v4h-1zM709 233h1v6h-1zM710 238h1v7h-1zM711 244h1v9h-1zM712 252h1v9h-1zM713 260h1v9h-1zM714 268h1v8h-1zM715 275h1v7h-1zM716 281h1v6h-1zM717 286h1v5h-1zM718 290h1v2h-1zM719 291h1v1h-1zM720 289h1v3h-1zM721 285h1v5h-1zM722 279h1v7h-1zM723 273h1v7h-1zM724 266h1v8h-1zM725 258h1v9h-1zM726 251h1v8h-1zM727 244h1v8h-1zM728 238h1v7h-1zM729 234h1v5h-1zM730 231h1v4h-1zM731 229h1v3h-1zM732 229h1v2h-1zM733 230h1v4h-1zM734 233h1v5h-1zM735 237h1v6h-1zM736 242h1v7h-1zM737 248h1v8h-1zM738 255h1v9h-1zM739 263h1v8h-1zM740 270h1v7h-1zM741 276h1v6h-1zM742 281h1v5h-1zM743 285h1v4h-1zM744 288h1v2h-1zM745 288h1v2h-1zM746 285h1v4h-1zM747 281h1v5h-1zM748 276h1v6h-1zM749 269h1v8h-1zM750 263h1v7h-1zM751 256h1v7h-1zM752 249h1v8h-1zM753 243h1v7h-1zM754 238h1v6h-1zM755 235h1v4h-1zM756 233h1v3h-1zM757 232h1v2h-1zM758 232h1v2h-1zM759 233h1v4h-1zM760 236h1v5h-1zM761 240h1v7h-1zM762 246h1v7h-1zM763 252h1v7h-1zM764 258h1v8h-1zM765 265h1v7h-1zM766 271h1v7h-1zM767 277h1v5h-1zM768 281h1v4h-1zM769 284h1v3h-1zM770 286h1v1h-1zM771 284h1v3h-1zM772 282h1v3h-1zM773 277h1v6h-1zM774 272h1v6h-1zM775 266h1v7h-1zM776 260h1v7h-1zM777 254h1v7h-1zM778 248h1v7h-1zM779 243h1v6h-1zM780 239h1v5h-1zM781 236h1v4h-1zM782 235h1v2h-1zM783 234h1v2h-1zM784 235h1v2h-1zM785 236h1v5h-1zM786 240h1v5h-1zM787 244h1v6h-1zM788 249h1v7h-1zM789 255h1v7h-1zM790 261h1v7h-1zM791 267h1v6h-1zM792 272h1v6h-1zM793 277h1v4h-1zM794 280h1v4h-1zM795 283h1v2h-1zM796 283h1v2h-1zM797 281h1v3h-1zM798 278h1v4h-1zM799 274h1v5h-1zM800 269h1v6h-1zM801 263h1v7h-1zM802 258h1v6h-1zM803 252h1v7h-1zM804 247h1v6h-1zM805 243h1v5h-1zM806 239h1v5h-1zM807 237h1v3h-1zM808 237h2v1h-2zM810 237h1v3h-1zM811 239h1v5h-1zM812 243h1v5h-1zM813 247h1v6h-1zM814 252h1v6h-1zM815 257h1v7h-1zM816 263h1v6h-1zM817 268h1v6h-1zM818 273h1v5h-1zM819 277h1v4h-1zM820 280h1v2h-1zM821 281h1v2h-1zM822 281h1v2h-1zM823 279h1v3h-1zM824 275h1v5h-1zM825 271h1v5h-1zM826 266h1v6h-1zM827 261h1v6h-1zM828 256h1v6h-1zM829 251h1v6h-1zM830 246h1v6h-1zM831 243h1v4h-1zM832 240h1v4h-1zM833 239h1v2h-1zM834 239h1v1h-1zM835 239h1v2h-1zM836 240h1v3h-1zM837 242h1v4h-1zM838 246h1v5h-1zM839 250h1v5h-1zM840 254h1v6h-1zM841 259h1v6h-1zM842 264h1v6h-1zM843 269h1v5h-1zM844 273h1v4h-1zM845 276h1v4h-1zM846 279h1v2h-1zM847 280h1v1h-1zM848 278h1v3h-1zM849 276h1v3h-1zM850 273h1v4h-1zM851 268h1v6h-1zM852 264h1v5h-1zM853 259h1v6h-1zM854 254h1v6h-1zM855 250h1v5h-1zM856 246h1v5h-1zM857 243h1v4h-1zM858 241h1v3h-1zM859 241h2v1h-2zM861 241h1v2h-1zM862 242h1v4h-1zM863 245h1v4h-1zM864 248h1v5h-1zM865 252h1v6h-1zM866 257h1v5h-1zM867 261h1v6h-1zM868 266h1v5h-1zM869 270h1v4h-1zM870 273h1v4h-1zM871 276h1v2h-1zM872 277h1v2h-1zM873 278h1v1h-1zM874 276h1v3h-1zM875 273h1v4h-1zM876 270h1v4h-1zM877 266h1v5h-1zM878 262h1v5h-1zM879 257h1v6h-1zM880 253h1v5h-1zM881 249h1v5h-1zM882 246h1v4h-1zM883 244h1v3h-1zM884 243h1v2h-1zM885 242h1v2h-1zM886 242h1v2h-1zM887 243h1v3h-1zM888 245h1v3h-1zM889 247h1v4h-1zM890 250h1v5h-1zM891 254h1v5h-1zM892 258h1v6h-1zM893 263h1v5h-1zM894 267h1v4h-1zM895 270h1v4h-1zM896 273h1v3h-1zM897 275h1v2h-1zM898 276h2v1h-2zM900 274h1v3h-1zM901 271h1v4h-1zM902 268h1v4h-1zM903 264h1v5h-1zM904 260h1v5h-1zM905 256h1v5h-1zM906 252h1v5h-1zM907 249h1v4h-1zM908 247h1v3h-1zM909 245h1v3h-1zM910 244h1v2h-1zM911 244h1v1h-1zM912 244h1v2h-1zM913 245h1v3h-1zM914 247h1v3h-1zM915 249h1v5h-1zM916 253h1v4h-1zM917 256h1v5h-1zM918 260h1v5h-1zM919 264h1v4h-1zM920 267h1v4h-1zM921 270h1v4h-1zM922 273h1v2h-1zM923 274h1v2h-1zM924 275h1v1h-1zM925 274h1v2h-1zM926 272h1v3h-1zM927 269h1v4h-1zM928 266h1v4h-1zM929 262h1v5h-1zM930 259h1v4h-1zM931 255h1v5h-1zM932 252h1v4h-1zM933 249h1v4h-1zM934 247h1v3h-1zM935 246h1v2h-1zM936 245h1v2h-1zM937 245h1v1h-1zM938 245h1v3h-1zM939 247h1v3h-1zM940 249h1v3h-1zM941 251h1v4h-1zM942 254h1v5h-1zM943 258h1v4h-1zM944 261h1v5h-1zM945 265h1v4h-1zM946 268h1v3h-1zM947 270h1v3h-1zM948 272h1v2h-1zM949 273h1v2h-1zM950 273h1v2h-1zM951 272h1v2h-1zM952 270h1v3h-1zM953 267h1v4h-1zM954 264h1v4h-1zM955 261h1v4h-1zM956 258h1v4h-1zM957 254h1v5h-1zM958 251h1v4h-1zM959 249h1v3h-1zM960 247h1v3h-1zM961 247h1v1h-1zM962 246h1v2h-1zM963 246h1v2h-1zM964 247h1v2h-1zM965 248h1v3h-1zM966 251h1v3h-1zM967 253h1v4h-1zM968 256h1v4h-1zM969 259h1v4h-1zM970 262h1v4h-1zM971 265h1v4h-1zM972 268h1v3h-1zM973 270h1v3h-1zM974 272h3v1h-3zM977 270h1v3h-1zM978 268h1v3h-1zM979 266h1v3h-1zM980 263h1v3h-1zM981 260h1v4h-1zM982 257h1v4h-1zM983 254h1v4h-1zM984 251h1v4h-1zM985 249h1v3h-1zM986 248h1v2h-1zM987 248h2v1h-2zM989 248h1v2h-1zM990 249h1v2h-1zM991 250h1v3h-1zM992 252h1v4h-1zM993 255h1v3h-1zM994 257h1v4h-1zM995 260h1v4h-1zM996 263h1v4h-1zM997 266h1v3h-1zM998 268h1v3h-1zM999 270h1v2h-1zM1000 271h2v1h-2zM1002 270h1v2h-1zM1003 269h1v2h-1zM1004 266h1v4h-1zM1005 264h1v3h-1zM1006 261h1v4h-1zM1007 259h1v3h-1zM1008 256h1v4h-1zM1009 253h1v4h-1zM1010 251h1v3h-1zM1011 250h1v2h-1zM1012 249h1v2h-1zM1013 249h2v1h-2zM1015 249h1v2h-1zM1016 250h1v3h-1zM1017 252h1v3h-1zM1018 254h1v3h-1zM1019 256h1v4h-1zM1020 259h1v3h-1zM1021 261h1v4h-1zM1022 264h1v3h-1zM1023 266h1v3h-1zM1024 268h1v2h-1zM1025 269h1v2h-1zM1026 270h2v1h-2zM1028 269h1v2h-1zM1029 267h1v3h-1zM1030 265h1v3h-1zM1031 263h1v3h-1zM1032 260h1v4h-1zM1033 258h1v3h-1zM1034 255h1v4h-1zM1035 253h1v3h-1zM1036 251h1v3h-1zM1037 250h1v2h-1zM1038 250h3v1h-3zM1041 250h1v2h-1zM1042 251h1v3h-1zM1043 253h1v3h-1zM1044 255h1v3h-1zM1045 257h1v4h-1zM1046 260h1v3h-1zM1047 262h1v3h-1zM1048 264h1v3h-1zM1049 266h1v3h-1zM1050 268h1v2h-1zM1051 269h3v1h-3zM1054 267h1v3h-1zM1055 266h1v2h-1zM1056 264h1v3h-1zM1057 262h1v3h-1zM1058 259h1v4h-1zM1059 257h1v3h-1zM1060 255h1v3h-1zM1061 253h1v3h-1zM1062 252h1v2h-1zM1063 251h1v2h-1zM1064 250h1v2h-1zM1065 250h1v2h-1zM1066 251h1v1h-1zM1067 251h1v3h-1zM1068 253h1v2h-1zM1069 254h1v3h-1zM1070 256h1v3h-1zM1071 258h1v4h-1zM1072 261h1v3h-1zM1073 263h1v3h-1zM1074 265h1v2h-1zM1075 266h1v3h-1zM1076 268h1v1h-1zM1077 268h1v2h-1zM1078 268h1v2h-1zM1079 267h1v2h-1zM1080 266h1v2h-1zM1081 265h1v2h-1zM1082 263h1v3h-1zM1083 261h1v3h-1zM1084 258h1v4h-1zM1085 256h1v3h-1zM1086 255h1v2h-1zM1087 253h1v3h-1zM1088 252h1v2h-1zM1089 251h1v2h-1zM1090 251h1v1h-1zM1091 251h1v2h-1zM1092 252h1v1h-1zM1093 252h1v3h-1zM1094 254h1v2h-1zM1095 255h1v3h-1zM1096 257h1v3h-1zM1097 259h1v3h-1zM1098 261h1v3h-1zM1099 263h1v3h-1zM1100 265h1v2h-1zM1101 266h1v2h-1zM1102 267h1v2h-1zM1103 268h1v1h-1zM1104 267h1v2h-1zM1105 266h1v2h-1zM1106 265h1v2h-1zM1107 264h1v2h-1zM1108 262h1v3h-1zM1109 260h1v3h-1zM1110 258h1v3h-1zM1111 256h1v3h-1zM1112 255h1v2h-1zM1113 253h1v2h-1zM1114 252h1v2h-1zM1115 252h2v1h-2zM1117 252h1v2h-1zM1118 253h1v1h-1zM1119 253h1v3h-1zM1120 255h1v2h-1zM1121 256h1v3h-1zM1122 258h1v3h-1zM1123 260h1v3h-1zM1124 262h1v2h-1zM1125 263h1v3h-1zM1126 265h1v2h-1zM1127 266h1v2h-1zM1128 267h2v1h-2zM1130 266h1v2h-1zM1131 265h1v2h-1zM1132 264h1v2h-1zM1133 263h1v2h-1zM1134 261h1v3h-1zM1135 259h1v3h-1zM1136 257h1v3h-1zM1137 256h1v2h-1zM1138 254h1v3h-1zM1139 253h1v2h-1zM1140 253h4v1h-4zM1144 253h1v2h-1zM1145 254h1v3h-1zM1146 256h1v2h-1zM1147 257h1v3h-1zM1148 259h1v3h-1zM1149 261h1v2h-1zM1150 262h1v3h-1zM1151 264h1v2h-1zM1152 265h1v2h-1zM1153 266h4v1h-4zM1157 265h1v2h-1zM1158 263h1v3h-1zM1159 262h1v2h-1zM1160 260h1v3h-1zM1161 259h1v2h-1zM1162 257h1v3h-1zM1163 256h1v2h-1zM1164 255h1v2h-1zM1165 254h1v2h-1zM1166 253h1v2h-1zM1167 253h1v1h-1zM1168 253h1v2h-1zM1169 254h1v1h-1zM1170 254h1v2h-1zM1171 255h1v3h-1zM1172 257h1v2h-1zM1173 258h1v3h-1zM1174 260h1v2h-1zM1175 261h1v3h-1zM1176 263h1v2h-1zM1177 264h1v2h-1zM1178 265h1v1h-1zM1179 265h1v2h-1zM1180 266h1v1h-1zM1181 265h1v2h-1zM1182 265h1v1h-1zM1183 264h1v2h-1zM1184 262h1v3h-1zM1185 261h1v2h-1zM1186 260h1v2h-1zM1187 258h1v3h-1zM1188 257h1v2h-1zM1189 256h1v2h-1zM1190 255h1v2h-1zM1191 254h1v2h-1zM1192 254h3v1h-3zM1195 254h1v2h-1zM1196 255h1v2h-1zM1197 256h1v2h-1zM1198 257h1v3h-1zM1199 259h1v2h-1zM1200 260h1v2h-1zM1201 262h1v2h-1zM1202 263h1v2h-1zM1203 264h1v2h-1zM1204 265h4v1h-4zM1208 264h1v2h-1zM1209 263h1v2h-1zM1210 262h1v2h-1zM1211 260h1v3h-1zM1212 259h1v2h-1zM1213 258h1v2h-1zM1214 257h1v2h-1zM1215 256h1v2h-1zM1216 255h1v2h-1zM1217 254h1v2h-1zM1218 254h1v1h-1zM1219 254h1v2h-1zM1220 255h1v1h-1zM1221 255h1v2h-1zM1222 256h1v2h-1zM1223 257h1v2h-1zM1224 258h1v2h-1zM1225 259h1v3h-1zM1226 261h1v2h-1zM1227 262h1v2h-1zM1228 263h1v2h-1zM1229 264h1v1h-1zM1230 264h1v2h-1zM1231 265h2v1h-2zM1233 264h1v2h-1zM1234 263h1v2h-1zM1235 262h1v2h-1zM1236 261h1v2h-1zM1237 260h1v2h-1zM1238 259h1v2h-1zM1239 257h1v3h-1zM1240 256h1v2h-1zM1241 256h1v1h-1zM1242 255h1v2h-1zM1243 255h3v1h-3zM1246 255h1v2h-1zM1247 256h1v2h-1zM1248 257h1v1h-1zM1249 258h1v2h-1zM1250 259h1v2h-1zM1251 260h1v2h-1zM1252 261h1v2h-1zM1253 262h1v2h-1zM1254 263h1v2h-1zM1255 264h4v1h-4zM1259 263h1v2h-1zM1260 263h1v1h-1zM1261 262h1v2h-1zM1262 261h1v2h-1zM1263 259h1v3h-1zM1264 258h1v2h-1zM1265 257h1v2h-1zM1266 256h1v2h-1zM1267 256h1v1h-1zM1268 255h1v2h-1zM1269 255h2v1h-2zM1271 255h1v2h-1zM1272 256h1v1h-1zM1273 256h1v2h-1zM1274 257h1v2h-1zM1275 258h1v2h-1zM1276 259h1v2h-1zM1277 260h1v2h-1zM1278 261h1v2h-1zM1279 262h1v2h-1zM1280 263h1v2h-1zM1281 264h3v1h-3zM1284 263h1v2h-1zM1285 263h1v1h-1zM1286 262h1v2h-1zM1287 261h1v2h-1zM1288 260h1v2h-1zM1289 259h1v2h-1zM1290 258h1v2h-1zM1291 257h1v2h-1zM1292 256h1v2h-1zM1293 256h5v1h-5zM1298 256h1v2h-1zM1299 257h1v2h-1zM1300 258h1v2h-1zM1301 259h1v2h-1zM1302 260h1v2h-1zM1303 261h1v1h-1zM1304 261h1v2h-1zM1305 262h1v2h-1zM1306 263h1v1h-1zM1307 263h1v2h-1zM1308 264h1v1h-1zM1309 263h1v2h-1zM1310 263h1v1h-1zM1311 262h1v2h-1zM1312 261h1v2h-1zM1313 261h1v1h-1zM1314 260h1v2h-1zM1315 259h1v2h-1zM1316 258h1v2h-1zM1317 257h1v2h-1zM1318 257h1v1h-1zM1319 256h1v2h-1zM1320 256h3v1h-3zM1323 256h1v2h-1zM1324 257h1v1h-1zM1325 257h1v2h-1zM1326 258h1v2h-1zM1327 259h1v2h-1zM1328 260h1v2h-1zM1329 261h1v2h-1zM1330 262h1v1h-1zM1331 262h1v2h-1zM1332 263h4v1h-4zM1336 262h1v2h-1zM1337 262h1v1h-1zM1338 261h1v2h-1zM1339 260h1v2h-1zM1340 259h1v2h-1zM1341 259h1v1h-1zM1342 258h1v2h-1zM1343 257h1v2h-1zM1344 257h1v1h-1z" fill="#00ff00"/></svg><div class="a" style="left:8px;top:402px;width:1380px;height:303px;background:#b9d1ea;border:1px solid #000;border-top:2px solid #2a2a2a;border-radius:6px 6px 0 0;border-bottom-color:#000"></div><div class="a" style="left:9px;top:404px;width:1378px;height:30px;background:linear-gradient(#98b3d0,#b8d0e9);border-left:1px solid #ffffff;border-top:1px solid #ffffff;border-radius:5px 5px 0 0"></div><div class="a" style="left:9px;top:434px;width:1px;height:269px;background:#ffffff"></div><div class="a" style="left:9px;top:703px;width:1357px;height:1px;background:#1aa3c8;"></div><div class="t" style="left:617px;top:415.73px;font-size:14.5px;line-height:14.5px;color:#1e1e1e;font-weight:normal;letter-spacing:0px;">1MHz.asc</div><svg class="a" style="left:0;top:0" width="40" height="440"><path d="M20 421h3v1h-3zM23 417h2v9h-2zM25 418h1v1h-1zM26 417h1v1h-1zM27 416h1v1h-1zM28 415h1v1h-1zM29 414h1v1h-1zM25 424h1v1h-1zM26 425h1v1h-1zM27 426h1v1h-1zM28 427h1v1h-1zM29 428h1v1h-1zM30 429h1v1h-1zM28 425h1v3h-1zM26 427h3v1h-3zM27 426h2v2h-2z" fill="#0000ff"/></svg><div class="a" style="left:1260px;top:413px;width:32px;height:18px;background:linear-gradient(#c5d8ec 0%,#b5cce4 45%,#98b2cf 50%,#b0c8e2 100%);border:1px solid #4d6185;border-radius:3px;box-shadow:inset 0 0 0 1px rgba(255,255,255,0.45)"></div><div class="a" style="left:1294px;top:413px;width:32px;height:18px;background:linear-gradient(#c5d8ec 0%,#b5cce4 45%,#98b2cf 50%,#b0c8e2 100%);border:1px solid #4d6185;border-radius:3px;box-shadow:inset 0 0 0 1px rgba(255,255,255,0.45)"></div><div class="a" style="left:1328px;top:413px;width:32px;height:18px;background:linear-gradient(#e5a293 0%,#d77b69 45%,#c0412b 50%,#cf6a52 100%);border:1px solid #5a1a1a;border-radius:3px;box-shadow:inset 0 0 0 1px rgba(255,255,255,0.45)"></div><svg class="a" style="left:1260px;top:413px" width="100" height="18"><rect x="10.5" y="9.5" width="11" height="4" rx="1" fill="#fff" stroke="#3c4048"/><rect x="44.5" y="4.5" width="10" height="8" rx="1" fill="#fff" stroke="#3c4048"/><rect x="47.5" y="7.5" width="4" height="2" fill="#6b88ad" stroke="#3c4048" stroke-width="0.6"/><path d="M80 6L87 11.5M87 6L80 11.5" stroke="#3c4048" stroke-width="4.6" stroke-linecap="round"/><path d="M80 6L87 11.5M87 6L80 11.5" stroke="#fff" stroke-width="2.6" stroke-linecap="round"/></svg><div class="a" style="left:16px;top:434px;width:1346px;height:263px;background:#ffffff;"></div><div class="a" style="left:16px;top:434px;width:1345px;height:262px;background:#e3e3e3;"></div><div class="a" style="left:16px;top:434px;width:1344px;height:261px;background:#a0a0a0;"></div><div class="a" style="left:17px;top:435px;width:1343px;height:260px;background:#505050;"></div><div class="a" style="left:18px;top:436px;width:1342px;height:259px;background:#c0c0c0;"></div><svg class="a" style="left:0;top:0" width="1366" height="728" shape-rendering="crispEdges"><path d="M680.5 511V473.5H810M851 473.5H884.5V505M884.5 559.5V591.5H680.5V552M970.5 579V607M884.5 651V677M970.5 651V677M1002.5 529V559M938 473.5H970.5V527M970.5 505.5H1002.5V524" fill="none" stroke="#0000ff" stroke-width="1"/><path d="M810 473.5H828.5M834 473.5H851M828.5 462V485M833.5 462V485" fill="none" stroke="#000080"/><circle cx="680.5" cy="531.5" r="20.5" fill="none" stroke="#000080"/><path d="M674.5 519.5H686.5M680.5 513.5V525.5M674.5 545.5H686.5" stroke="#000080"/><rect x="881" y="588" width="7" height="7" fill="#0000ff"/><rect x="967" y="502" width="7" height="7" fill="#0000ff"/><path d="M884.5 591V607L896.0 612.5L873.0 623L896.0 634.5L873.0 645.5L884.5 651" fill="none" stroke="#000080"/><path d="M970.5 591V607L982.0 612.5L959.0 623L982.0 634.5L959.0 645.5L970.5 651" fill="none" stroke="#000080"/><path d="M872.5 677.5H896.5L884.5 689.5Z" fill="none" stroke="#0000ff"/><path d="M958.5 677.5H982.5L970.5 689.5Z" fill="none" stroke="#0000ff"/><path d="M990.5 559.5H1014.5L1002.5 571.5Z" fill="none" stroke="#0000ff"/><path d="M991 524.5H1014M991 529.5H1014" stroke="#000080"/><path d="M884.5 505.5H879.5 C875.5 507.5 873.5 511.5 873.5 515.5 C873.5 519.5 874.5 522.5 877.5 524.5 C882.5 520.5 888.5 520.5 892.5 524.5 C888.5 528.5 882.5 528.5 877.5 524.5 C874.5 526.5 873.5 529.5 873.5 532.5 C873.5 535.5 874.5 538.5 877.5 540.5 C882.5 536.5 888.5 536.5 892.5 540.5 C888.5 544.5 882.5 544.5 877.5 540.5 C874.5 542.5 873.5 545.5 873.5 549.5 C873.5 554.5 876.5 557.5 879.5 559.5 H884.5" fill="none" stroke="#000080"/><circle cx="889.5" cy="514.0" r="2.2" fill="none" stroke="#000080"/><path d="M970.5 527.5H965.5 C961.5 529.5 959.5 533.5 959.5 537.5 C959.5 541.5 960.5 544.5 963.5 546.5 C968.5 542.5 974.5 542.5 978.5 546.5 C974.5 550.5 968.5 550.5 963.5 546.5 C960.5 548.5 959.5 551.5 959.5 554.5 C959.5 557.5 960.5 560.5 963.5 562.5 C968.5 558.5 974.5 558.5 978.5 562.5 C974.5 566.5 968.5 566.5 963.5 562.5 C960.5 564.5 959.5 567.5 959.5 571.5 C959.5 576.5 962.5 579.5 965.5 581.5 H970.5" fill="none" stroke="#000080"/><circle cx="975.5" cy="536.0" r="2.2" fill="none" stroke="#000080"/></svg><div class="a" style="left:6px;top:705px;width:1360px;height:23px;background:#f0f0f0;"></div><div class="a" style="left:6px;top:705px;width:1360px;height:1px;background:#a8a8a8;"></div><div class="a" style="left:6px;top:708px;width:1360px;height:1px;background:#d9d9d9;"></div><div class="a" style="left:6px;top:727px;width:1360px;height:1px;background:#b0a090;"></div><div class="t" style="left:7px;top:712.84px;font-size:12px;line-height:12px;color:#000;font-weight:normal;letter-spacing:-0.4px;">x = 12.84µs</div><div class="t" style="left:77.5px;top:712.84px;font-size:12px;line-height:12px;color:#000;font-weight:normal;letter-spacing:-0.4px;">y = 6.22KV</div><div class="t yl" style="top:145.0px">7KV</div><div class="t yl" style="top:160.4px">6KV</div><div class="t yl" style="top:175.7px">5KV</div><div class="t yl" style="top:191.1px">4KV</div><div class="t yl" style="top:206.4px">3KV</div><div class="t yl" style="top:221.8px">2KV</div><div class="t yl" style="top:237.1px">1KV</div><div class="t yl" style="top:252.5px">0KV</div><div class="t yl" style="top:267.9px">-1KV</div><div class="t yl" style="top:283.2px">-2KV</div><div class="t yl" style="top:298.6px">-3KV</div><div class="t yl" style="top:313.9px">-4KV</div><div class="t yl" style="top:329.3px">-5KV</div><div class="t yl" style="top:344.6px">-6KV</div><div class="t yl" style="top:360.0px">-7KV</div><div class="t xl" style="left:25.0px">0µs</div><div class="t xl" style="left:153.9px">5µs</div><div class="t xl" style="left:282.8px">10µs</div><div class="t xl" style="left:411.7px">15µs</div><div class="t xl" style="left:540.6px">20µs</div><div class="t xl" style="left:669.5px">25µs</div><div class="t xl" style="left:798.4px">30µs</div><div class="t xl" style="left:927.3px">35µs</div><div class="t xl" style="left:1056.2px">40µs</div><div class="t xl" style="left:1185.1px">45µs</div><div class="t xl" style="left:1314.0px">50µs</div><div class="t" style="left:661px;top:134.5px;width:76px;text-align:center;font-size:14px;line-height:16px;font-weight:bold;color:#00ff00;letter-spacing:-0.4px">V(n003)</div><div class="t" style="left:820px;top:445.30px;font-size:15px;line-height:15px;color:#000;font-weight:bold;letter-spacing:0px;">C1</div><div class="t" style="left:809px;top:485.30px;font-size:15px;line-height:15px;color:#000;font-weight:bold;letter-spacing:0px;">600pF</div><div class="t" style="left:854px;top:509.30px;font-size:15px;line-height:15px;color:#000;font-weight:bold;letter-spacing:0px;">L1</div><div class="t" style="left:835.5px;top:536.30px;font-size:15px;line-height:15px;color:#000;font-weight:bold;letter-spacing:0px;">42µH</div><div class="t" style="left:696px;top:497.30px;font-size:15px;line-height:15px;color:#000;font-weight:bold;letter-spacing:0px;">V1</div><div class="t" style="left:697px;top:516.30px;font-size:15px;line-height:15px;color:#000;font-weight:bold;letter-spacing:0px;">Rser=100</div><div class="t" style="left:898px;top:610.30px;font-size:15px;line-height:15px;color:#000;font-weight:bold;letter-spacing:0px;">R1</div><div class="t" style="left:898px;top:634.30px;font-size:15px;line-height:15px;color:#000;font-weight:bold;letter-spacing:0px;">10000k</div><div class="t" style="left:916px;top:445.30px;font-size:15px;line-height:15px;color:#000;font-weight:bold;letter-spacing:-0.18px;">K1 L1 L4 0.1</div><div class="t" style="left:1007px;top:503.30px;font-size:15px;line-height:15px;color:#000;font-weight:bold;letter-spacing:0px;">C2</div><div class="t" style="left:1007px;top:540.30px;font-size:15px;line-height:15px;color:#000;font-weight:bold;letter-spacing:0px;">25pF</div><div class="t" style="left:939.5px;top:529.30px;font-size:15px;line-height:15px;color:#000;font-weight:bold;letter-spacing:0px;">L4</div><div class="t" style="left:905px;top:556.30px;font-size:15px;line-height:15px;color:#000;font-weight:bold;letter-spacing:0px;">1000µH</div><div class="t" style="left:983.0px;top:610.30px;font-size:15px;line-height:15px;color:#000;font-weight:bold;letter-spacing:0px;">R2</div><div class="t" style="left:983.0px;top:634.30px;font-size:15px;line-height:15px;color:#000;font-weight:bold;letter-spacing:0px;">1</div><div class="t" style="left:329.5px;top:523.30px;font-size:15px;line-height:15px;color:#000;font-weight:bold;letter-spacing:-0.19px;">PULSE(0 3000 10us 0.1us 0.1us 0.5us 1)</div><div class="t" style="left:423.5px;top:598.80px;font-size:15px;line-height:15px;color:#000;font-weight:bold;letter-spacing:-0.17px;">.tran 0 50us 0 10ns</div>
</body></html>
